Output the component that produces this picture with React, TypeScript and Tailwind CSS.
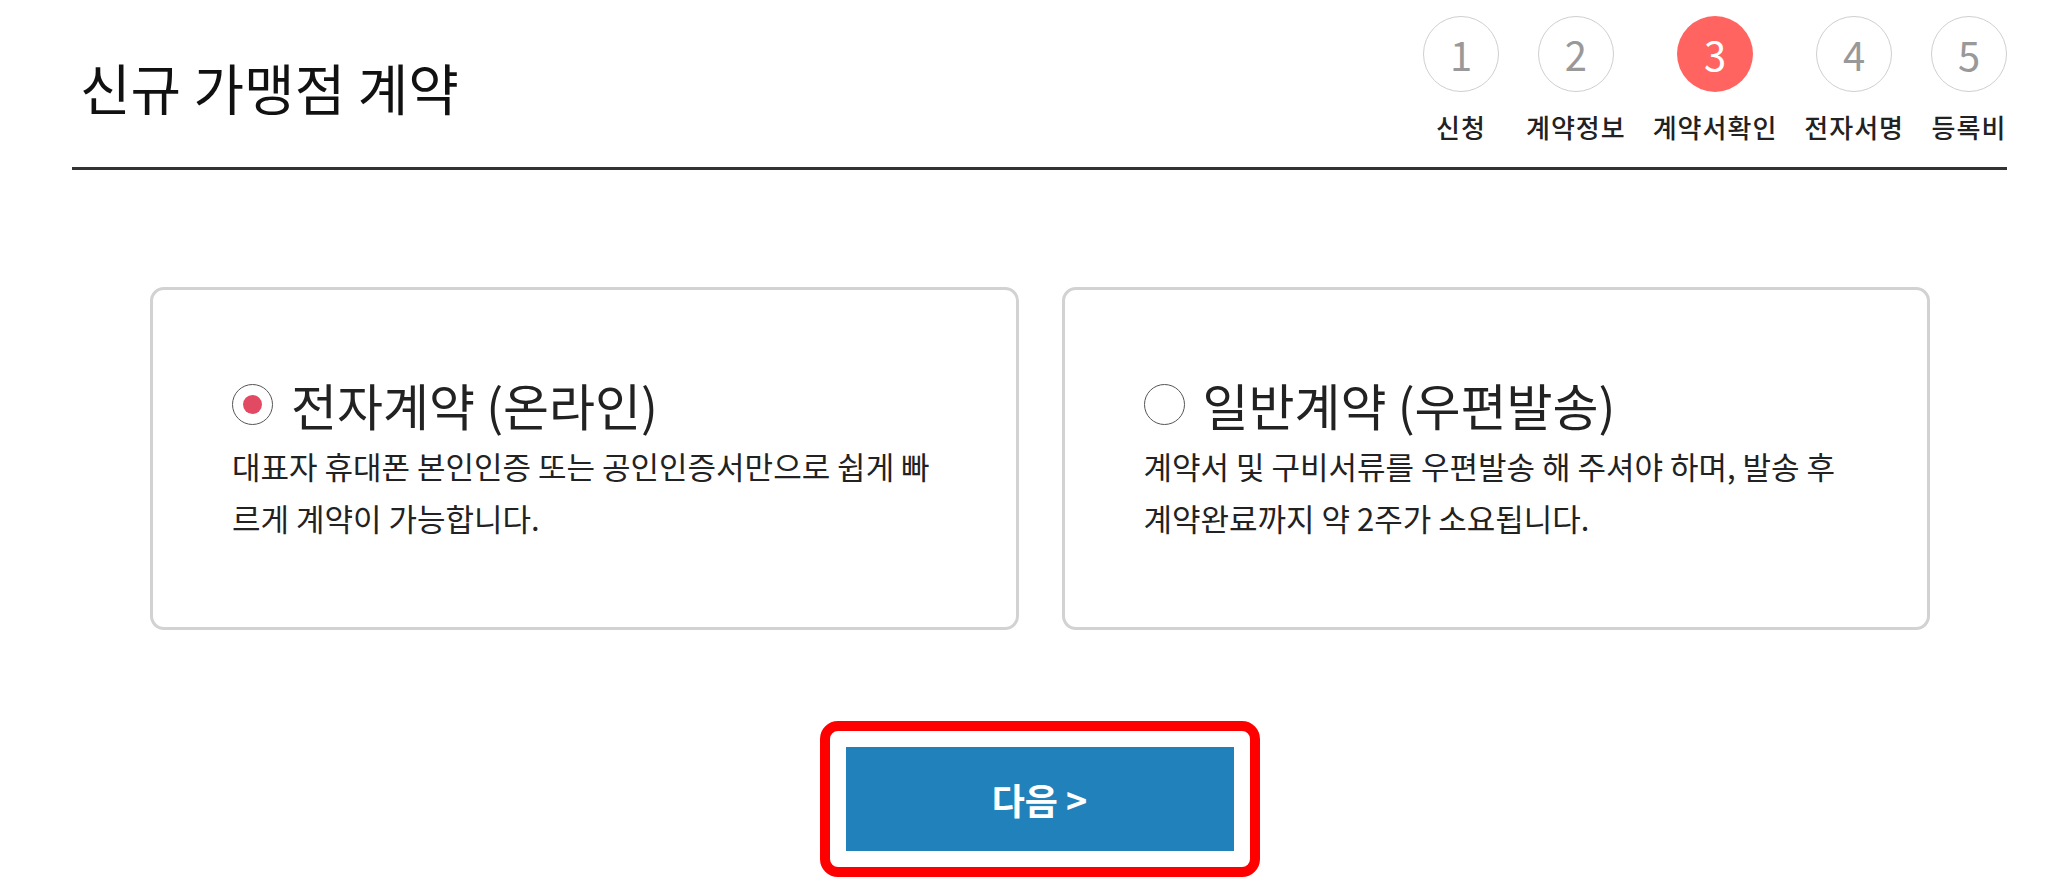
import { useState } from 'react';

type ContractType = 'online' | 'post';

const steps = [
  { no: 1, label: '신청' },
  { no: 2, label: '계약정보' },
  { no: 3, label: '계약서확인' },
  { no: 4, label: '전자서명' },
  { no: 5, label: '등록비' },
];

const options: { id: ContractType; title: string; desc: string }[] = [
  {
    id: 'online',
    title: '전자계약 (온라인)',
    desc: '대표자 휴대폰 본인인증 또는 공인인증서만으로 쉽게 빠르게 계약이 가능합니다.',
  },
  {
    id: 'post',
    title: '일반계약 (우편발송)',
    desc: '계약서 및 구비서류를 우편발송 해 주셔야 하며, 발송 후 계약완료까지 약 2주가 소요됩니다.',
  },
];

export default function App() {
  const [selected, setSelected] = useState<ContractType>('online');
  const current = 3;

  return (
    <div className="min-h-screen bg-white font-['Noto_Sans_CJK_KR',sans-serif] text-[#222]">
      <div className="ml-[72px] mr-[41px]">
        {/* 헤더 */}
        <div className="flex h-[167px] items-start justify-between">
          <h1 className="mt-[54px] pl-[8px] text-[55px] leading-[64px] font-normal text-[#111]">
            신규 가맹점 계약
          </h1>
          <ol className="mt-[16px] flex gap-[27px]">
            {steps.map((s) => (
              <li key={s.no} className="flex min-w-[76px] flex-col items-center">
                <span
                  className={`flex h-[76px] w-[76px] items-center justify-center rounded-full text-[40px] font-normal ${
                    s.no === current
                      ? 'bg-[#ff6461] text-white'
                      : 'border border-[#cfcfcf] text-[#999]'
                  }`}
                >
                  {s.no}
                </span>
                <span className="mt-[18px] text-[26px] leading-[34px] font-medium tracking-[1px] whitespace-nowrap text-[#222]">
                  {s.label}
                </span>
              </li>
            ))}
          </ol>
        </div>
        <div className="h-[3px] bg-[#333]" />

        {/* 계약 방식 선택 */}
        <div className="mt-[117px] grid grid-cols-2 gap-[43px] pl-[78px] pr-[77px]">
          {options.map((o) => (
            <label
              key={o.id}
              onClick={() => setSelected(o.id)}
              className="h-[343px] cursor-pointer rounded-[14px] border-[3px] border-[#d2d2d2] pt-[84px] pr-[66px] pl-[79px]"
            >
              <div className="flex items-center gap-[18px]">
                <span className="flex h-[41px] w-[41px] shrink-0 items-center justify-center rounded-full border-[1.5px] border-[#555]">
                  {selected === o.id && <span className="h-[19px] w-[19px] rounded-full bg-[#e24a64]" />}
                </span>
                <span className="text-[50px] leading-[60px] text-[#222]">{o.title}</span>
              </div>
              <p className="mt-[6px] text-[31px] leading-[52px] text-[#222]">{o.desc}</p>
            </label>
          ))}
        </div>

        {/* 다음 버튼 */}
        <div className="mt-[91px] flex justify-center">
          <div className="rounded-[18px] border-[10px] border-[#ff0000] p-[16px]">
            <button className="flex h-[104px] w-[388px] items-center justify-center bg-[#2182bb] text-[36px] font-bold text-white">
              다음 &gt;
            </button>
          </div>
        </div>
      </div>
    </div>
  );
}
